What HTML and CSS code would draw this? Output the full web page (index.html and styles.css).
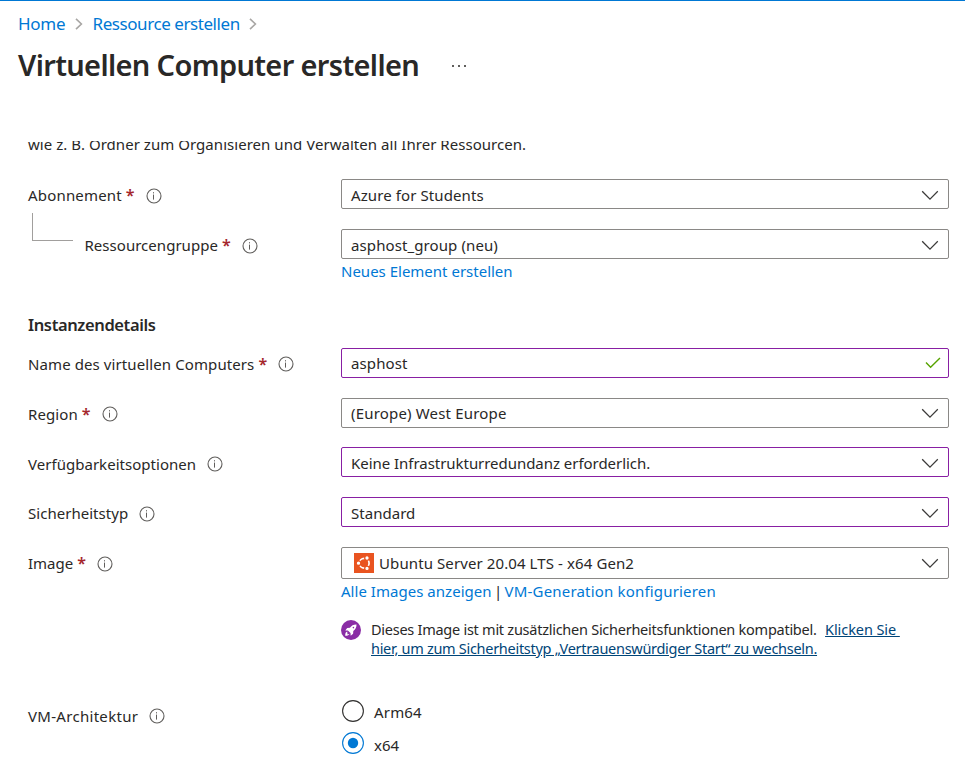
FILE: index.html
```
<!DOCTYPE html>
<html lang="de">
<head>
<meta charset="utf-8">
<title>Virtuellen Computer erstellen</title>
<link rel="stylesheet" href="styles.css">
</head>
<body>
<svg class="defs" aria-hidden="true">
  <symbol id="info" viewBox="0 0 16 16"><circle cx="8" cy="8" r="7" fill="none" stroke="#605e5c" stroke-width="1.1"/><path d="M7.5 6.6v5" stroke="#605e5c" stroke-width="1"/><path d="M7.5 4.2v1.2" stroke="#605e5c" stroke-width="1"/></symbol>
  <symbol id="down" viewBox="0 0 18 11"><path d="M1.2 1.2 9 9.2 16.8 1.2" fill="none" stroke="#3b3a39" stroke-width="1.25"/></symbol>
  <symbol id="crumb" viewBox="0 0 8 14"><path d="M1 1.8 6.4 7 1 12.2" fill="none" stroke="#a8a6a4" stroke-width="1.6"/></symbol>
</svg>
<header class="header">
  <nav class="breadcrumb">
    <a class="crumb-home">Home</a><svg class="crumb-sep"><use href="#crumb"/></svg>
    <a class="crumb-create">Ressource erstellen</a><svg class="crumb-sep"><use href="#crumb"/></svg>
  </nav>
  <div class="title-row">
    <h1>Virtuellen Computer erstellen</h1>
    <svg class="more" viewBox="0 0 14 2"><path d="M0 0h2v2H0zM6 0h2v2H6zM12 0h2v2h-2z" fill="#605e5c"/></svg>
  </div>
</header>
<main class="scroll">
  <p class="intro">wie z. B. Ordner zum Organisieren und Verwalten all Ihrer Ressourcen.</p>

  <div class="row subscription">
    <div class="label"><span class="wide">Abonnement</span><b>*</b><svg class="info"><use href="#info"/></svg></div>
    <div class="field"><span>Azure for Students</span><svg class="down"><use href="#down"/></svg></div>
  </div>
  <div class="row group">
    <div class="label child"><i class="branch"></i><span class="tight">Ressourcengruppe</span><b>*</b><svg class="info"><use href="#info"/></svg></div>
    <div class="field"><span>asphost_group (neu)</span><svg class="down"><use href="#down"/></svg></div>
  </div>
  <div class="links new-link"><a class="even">Neues Element erstellen</a></div>

  <h2>Instanzendetails</h2>

  <div class="row name">
    <div class="label high"><span>Name des virtuellen Computers</span><b>*</b><svg class="info"><use href="#info"/></svg></div>
    <div class="field edited high"><span>asphost</span><svg class="check" viewBox="0 0 16 12"><path d="M1 5.6 5.6 10.3 15 1" fill="none" stroke="#57a300" stroke-width="1.4"/></svg></div>
  </div>
  <div class="row region">
    <div class="label high"><span>Region</span><b>*</b><svg class="info"><use href="#info"/></svg></div>
    <div class="field high"><span class="wide">(Europe) West Europe</span><svg class="down"><use href="#down"/></svg></div>
  </div>
  <div class="row availability">
    <div class="label low"><span class="tight">Verfügbarkeitsoptionen</span><svg class="info"><use href="#info"/></svg></div>
    <div class="field edited"><span class="snug">Keine Infrastrukturredundanz erforderlich.</span><svg class="down"><use href="#down"/></svg></div>
  </div>
  <div class="row security">
    <div class="label"><span class="tight">Sicherheitstyp</span><svg class="info"><use href="#info"/></svg></div>
    <div class="field edited"><span class="tight">Standard</span><svg class="down"><use href="#down"/></svg></div>
  </div>
  <div class="row image">
    <div class="label"><span class="even">Image</span><b>*</b><svg class="info"><use href="#info"/></svg></div>
    <div class="field tall">
      <svg class="ubuntu" viewBox="0 0 20 20"><path d="M0 0h20v20H0z" fill="#e95420"/><circle cx="10.2" cy="10.2" r="4.9" fill="none" stroke="#fff" stroke-width="1.7"/><g fill="#fff" stroke="#e95420" stroke-width="1.3"><circle cx="4.5" cy="10.2" r="2.3"/><circle cx="13" cy="5" r="2.3"/><circle cx="13" cy="15.4" r="2.3"/></g></svg>
      <span>Ubuntu Server 20.04 LTS - x64 Gen2</span><svg class="down"><use href="#down"/></svg>
    </div>
  </div>
  <div class="links image-links"><a class="tight">Alle Images anzeigen</a><span class="bar">|</span><a class="wide">VM-Generation konfigurieren</a></div>
  <div class="note">
    <svg class="rocket" viewBox="0 0 20 20"><circle cx="10" cy="10" r="10" fill="#8a2da5"/><path d="M15.5 4.4c-3-.1-5 1.1-6.6 3.3L6.2 8 4.3 10.4l2.6.1 2.6 2.6.2 2.6 2.4-2 .2-2.7c2.1-1.6 3.3-3.7 3.2-6.6zM6.2 11.5c-1.2.4-1.7 1.5-1.9 2.8l-.1 1.5 1.5-.1c1.3-.2 2.4-.7 2.8-1.9l-2 .6z" fill="#fff"/><circle cx="12.4" cy="7.6" r=".8" fill="#8a2da5"/></svg>
    <p>Dieses Image ist mit zusätzlichen Sicherheitsfunktionen kompatibel. <a class="note-first">Klicken Sie&nbsp;</a><br><a class="note-second">hier, um zum Sicherheitstyp „Vertrauenswürdiger Start“ zu wechseln.</a></p>
  </div>

  <div class="row architecture">
    <div class="label low"><span class="architecture-name">VM-Architektur</span><svg class="info"><use href="#info"/></svg></div>
    <div class="radios">
      <div class="radio"><svg viewBox="0 0 22 22"><circle cx="11" cy="11" r="10.4" fill="#fff" stroke="#323130" stroke-width="1.1"/></svg><span class="wide">Arm64</span></div>
      <div class="radio"><svg viewBox="0 0 22 22"><circle cx="11" cy="11" r="10.4" fill="#fff" stroke="#0078d4" stroke-width="1.1"/><circle cx="11" cy="11" r="5.2" fill="#0078d4"/></svg><span class="tight">x64</span></div>
    </div>
  </div>
</main>
</body>
</html>
```
FILE: styles.css
```
* { box-sizing: border-box; }
body {
  margin: 0;
  height: 772px;
  overflow: hidden;
  display: flex;
  flex-direction: column;
  border-top: 1px solid #0078d4;
  background: #fff;
  color: #292827;
  font: 15px/20px "Noto Sans", "Open Sans", sans-serif;
  letter-spacing: .1px;
}
h1, h2, p { margin: 0; }
svg { display: block; flex: none; }
.defs { position: absolute; width: 0; height: 0; }
a { color: #0078d4; }
.wide { letter-spacing: .18px; }
.tight { letter-spacing: .03px; }
.even { letter-spacing: 0; }
.snug { letter-spacing: -.04px; }

.header { height: 140px; flex: none; padding-left: 18px; }
.breadcrumb { height: 46px; display: flex; align-items: center; font-size: 17px; }
.crumb-home { letter-spacing: -.3px; width: 56.5px; }
.crumb-create { letter-spacing: -.43px; width: 156px; }
.crumb-sep { width: 8px; height: 14px; margin-right: 10px; }
.title-row { display: flex; align-items: center; height: 38px; }
h1 { font-size: 29px; line-height: 38px; font-weight: 600; letter-spacing: -.65px; width: 434px; margin-top: -2px; white-space: nowrap; }
.more { width: 14px; height: 2px; }

.scroll { flex: 1; overflow: hidden; padding: 0 16px 0 28px; }
.intro { margin: -7px 0 25px; letter-spacing: .04px; }
.row { display: grid; grid-template-columns: 313px 608px; height: 30px; }
.label { display: flex; align-items: center; height: 30px; padding-top: 2px; }
.label b { color: #a4262c; font-weight: 600; font-size: 16px; margin-left: 4px; width: 8px; }
.info { width: 16px; height: 16px; margin: 1px 0 0 11px; }
.label b + .info { margin-left: 12px; }
.label.high .info { margin-top: 0; }
.label.low { padding-top: 3px; }
.label.low .info { margin-top: 0; }
.field {
  display: flex;
  align-items: center;
  height: 30px;
  padding: 2px 9px 0;
  border: 1px solid #8a8886;
  border-radius: 2px;
}
.field.edited { border-color: #881fa3; }
.field.high { padding-top: 0; }
.field.high .down { margin-top: 1px; }
.field.tall { height: 32px; padding: 0 9px 0 12px; }
.down { width: 18px; height: 11px; margin-left: auto; }
.check { width: 16px; height: 12px; margin: -1px -2px 0 auto; }
.group { margin-top: 20px; }
.child { padding-left: 56.5px; position: relative; }
.branch { position: absolute; left: 4px; top: -16px; width: 41px; height: 28px; border: solid #a19f9d; border-width: 0 0 1px 1px; }
.new-link { margin-top: 2px; }
h2 { font-size: 16.5px; line-height: 24px; font-weight: 600; letter-spacing: -.38px; margin: 32px 0 11px; }
.region { margin-top: 20px; }
.availability { margin-top: 19px; }
.security, .image { margin-top: 20px; }
.image { height: 32px; }
.ubuntu { width: 20px; height: 20px; margin-right: 5px; }
.links { margin-left: 313px; display: flex; }
.image-links { margin-top: 2px; }
.bar { width: 13px; text-align: center; }
.note { display: flex; margin: 19px 0 0 313px; font-size: 14.5px; line-height: 19px; letter-spacing: -.26px; white-space: nowrap; }
.rocket { width: 20px; height: 20px; margin-right: 10px; }
.note a { color: #004578; text-decoration: underline; }
.note-first { margin-left: 5px; letter-spacing: -.08px; }
.note-second { letter-spacing: -.29px; }
.architecture { margin-top: 41px; height: 60px; }
.architecture-name { letter-spacing: .3px; }
.radios { display: flex; flex-direction: column; gap: 10px; padding: 1px 0 0 1px; }
.radio { display: flex; height: 22px; gap: 10px; }
.radio svg { width: 22px; height: 22px; }
.radio span { margin-top: 2px; }
.radio + .radio span { margin-top: 3px; }
```
